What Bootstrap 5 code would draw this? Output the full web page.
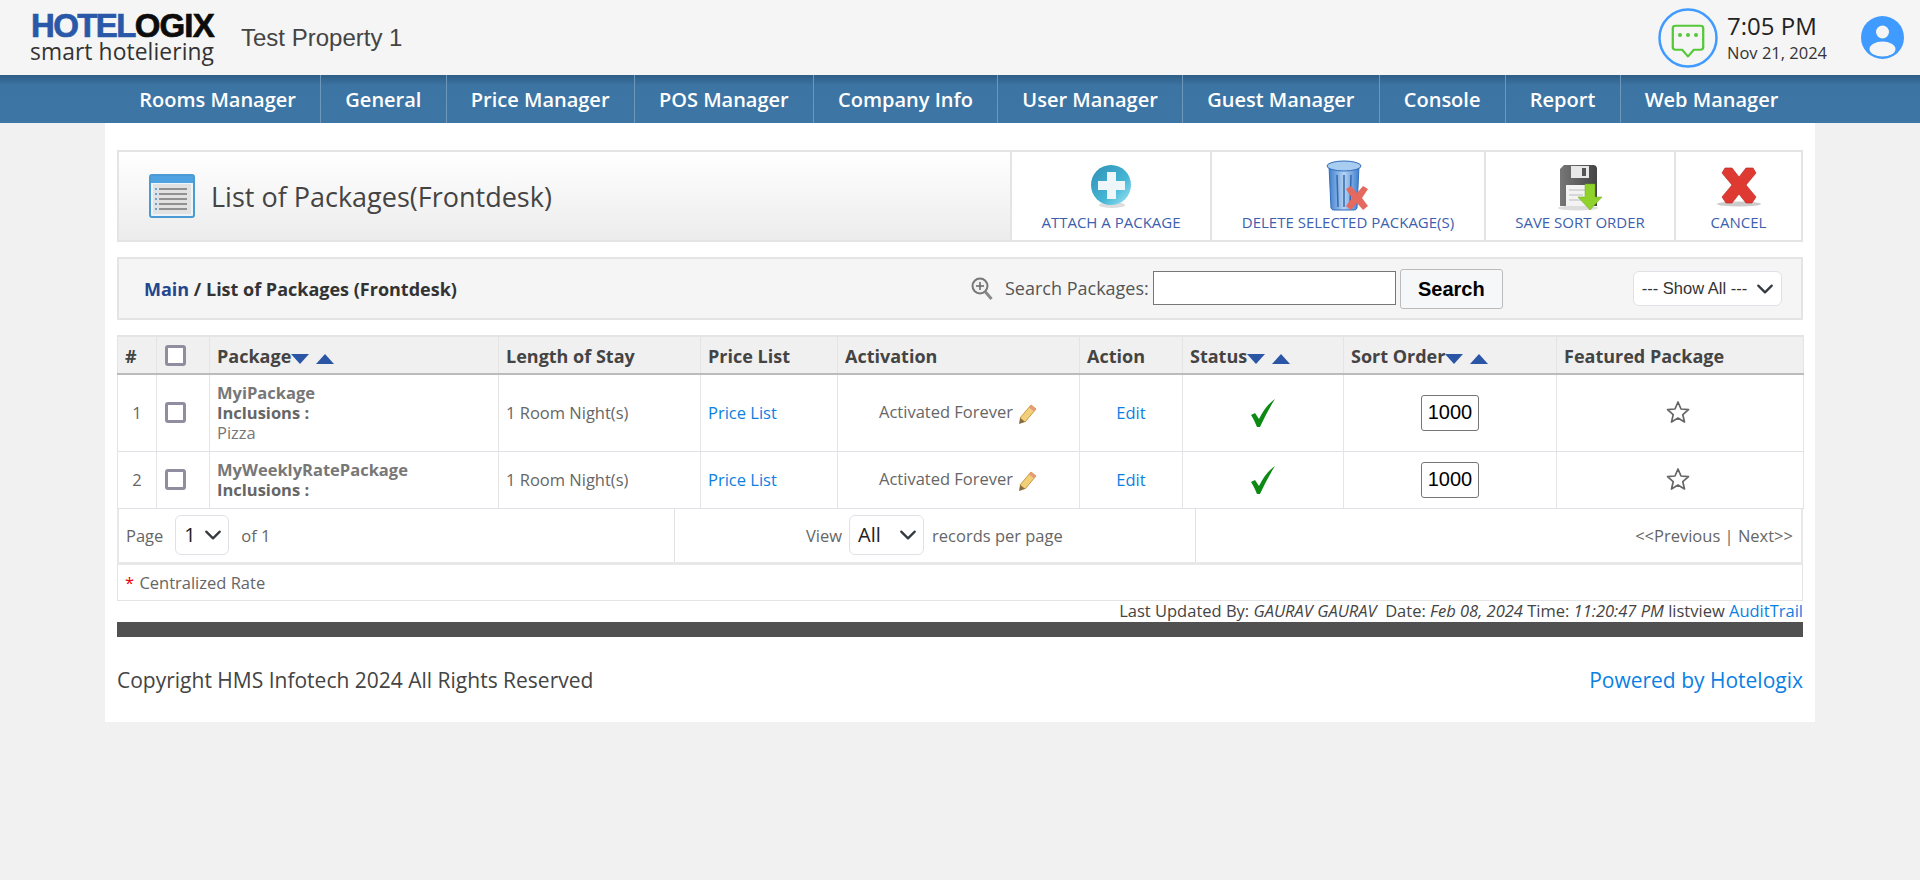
<!DOCTYPE html>
<html lang="en"><head><meta charset="utf-8"><title>List of Packages</title>
<link href="https://cdn.jsdelivr.net/npm/bootstrap@5.3.0/dist/css/bootstrap.min.css" rel="stylesheet">
<style>
body{background:#f1f1f1;font-family:"Open Sans",sans-serif;color:#555;font-size:16.5px}
a{text-decoration:none}
.hx-top{height:75px;background:#f5f5f5;padding:0 16px 0 30px}
.hx-logo{width:190px;line-height:1}
.hx-logo-a{font:700 33px/27px "Liberation Sans",sans-serif;letter-spacing:-1.6px;color:#2a58a8;white-space:nowrap;-webkit-text-stroke:.7px currentColor;padding-left:1px}
.hx-logo-a b{color:#0c0c0c;font-weight:700;letter-spacing:-.9px}
.hx-logo-b{font:400 22.800px/25px "Open Sans",sans-serif;color:#333;white-space:nowrap;letter-spacing:.1px}
.hx-prop{font:400 24px "Liberation Sans",sans-serif;color:#444;margin-left:21px}
.hx-time{font-size:24px;line-height:30px;color:#222;margin-left:9px;width:134px}
.hx-date{font-size:16.5px;line-height:24px;color:#333}
.hx-nav{height:48px;background:linear-gradient(#2e5e85,#3c74a3 22%,#3d76a5);padding-left:115px}
.hx-nav a{color:#fff;font-weight:600;font-size:20px;padding:1px 24.2px 0;line-height:47px;border-right:1px solid #6d98bc;white-space:nowrap}
.hx-nav a:last-child{border-right:0}
.hx-page{width:1710px;background:#fff;padding:27px 12px 0;height:599px}
.hx-title{height:92px;border:2px solid #e4e4e4;background:linear-gradient(#fff,#ececec);margin-bottom:15px}
.hx-title h1{font-size:27px;font-weight:400;color:#444;margin:2px 0 0 16px}
.hx-title-l{padding-left:30px}
.hx-tool{background:#fff;border-left:2px solid #e4e4e4;color:#3c60ae;font-size:15px;text-align:center;height:88px;padding-top:8px;text-transform:uppercase}
.hx-tool span{display:block;line-height:20px}
.hx-tool svg{display:block;margin:0 auto;height:52px}
.hx-t1{width:200px}.hx-t2{width:274px}.hx-t3{width:190px}.hx-t4{width:127px}
.hx-crumb{height:63px;background:#f5f5f5;border:2px solid #e4e4e4;margin-bottom:15px;padding-left:25px}
.hx-crumb-t{font-size:18px;font-weight:700;color:#333;width:826px;padding-top:2px}
.hx-crumb-t a{color:#24468f}
.hx-slabel{font-size:18px;color:#555;margin:0 4px 0 11px;white-space:nowrap}
.hx-in{width:243px;height:34px;border:1px solid #767676;border-radius:0;padding:0 4px;margin-bottom:1px;background:#fff}
.hx-sbtn{font:700 20px "Liberation Sans",sans-serif;color:#000;background:#f6f7f9;border:1px solid #bbb;width:103px;height:40px;padding:2px 0 0;margin:0 0 0 4px;border-radius:3px}
.hx-sel{font-family:"Liberation Sans",sans-serif;font-size:16.5px;width:149px;height:35px;padding:0 0 0 8px;margin-left:130px;color:#333;background-position:right 4px center;background-size:24px 18px}
.hx-table{table-layout:fixed;width:1686px;margin:0;color:#666;font-size:16.5px}
.hx-table th,.hx-table td{padding:2px 7px 0;vertical-align:middle;border-color:#e4e4e4}
.hx-table .hx-ctl{padding-top:0}
.hx-table thead th{background:#f0f0f0;color:#444;font-weight:700;font-size:18px;height:38px;border-top:2px solid #e4e4e4;border-bottom:2px solid #bbb;white-space:nowrap}
.hx-table tbody tr:first-child td{height:77px}
.hx-table tbody tr:last-child td{height:57px}
.hx-table .hx-pk{line-height:20px;font-size:16.5px;color:#777;padding-top:0}
.hx-pk b{font-weight:700;color:#777}
.hx-pk b+br+b{color:#666}
.w1{width:39px}.w2{width:53px}.w3{width:289px}.w4{width:202px}.w5{width:137px}.w6{width:242px}.w7{width:103px}.w8{width:161px}.w9{width:213px}.w10{width:247px}
.hx-cb{width:21px;height:21px;border:3px solid #8e8ea0;border-radius:3px;margin:0 0 0 1px;display:block;background:#fff;appearance:none}
.hx-tri{margin-left:0;vertical-align:-1px}
.hx-tri2{margin-left:7px}
.hx-link{color:#0b7fe3}
.hx-num{width:58px;height:36px;font:400 20px "Liberation Sans",sans-serif;color:#000;border:1px solid #767676;border-radius:3px;text-align:center;padding:0;display:block;margin:0 auto}
.hx-acti{padding-left:41px!important;position:relative;top:-1px}
.hx-star{display:block;margin:-2px auto 0;position:relative;left:-2px}
.hx-pager{height:56px;border:2px solid #e8e8e8;border-top:0;border-bottom-width:3px;background:#fff;font-size:16.5px;color:#666;line-height:1.5}
.hx-p1{width:556px;padding:2px 0 0 7px;border-right:1px solid #e2e2e2}
.hx-p2{width:521px;padding:2px 0 0 131px;border-right:1px solid #e2e2e2}
.hx-p3{flex:1;padding:2px 8px 0 0}
.hx-ps{width:54px;height:40px;font-size:20px;padding:0 0 0 8px;margin:0 12px;font-family:"Open Sans",sans-serif;color:#222;background-position:right 3px center;background-size:24px 18px;position:relative;top:-1px}
.hx-ps2{width:75px;margin:0 8px 0 7px}
.hx-note{height:36px;border:1px solid #e4e4e4;border-top:0;padding:0 7px;line-height:35px;color:#666}
.hx-note i{color:#e00;font-style:normal;margin-right:1px}
.hx-upd{height:21px;line-height:20px;text-align:right;color:#444;white-space:pre}
.hx-bar{height:15px;background:#515151}
.hx-foot{font-size:21px;color:#444;margin-top:28px}
</style></head><body>
<header class="hx-top d-flex align-items-center">
  <div class="hx-logo"><div class="hx-logo-a">HOTEL<b>OGIX</b></div><div class="hx-logo-b">smart hoteliering</div></div>
  <div class="hx-prop">Test Property 1</div>
  <div class="ms-auto d-flex align-items-center">
    <svg width="60" height="60" viewBox="0 0 60 60"><circle cx="30" cy="30" r="28.5" fill="none" stroke="#3f9bff" stroke-width="2.5"/><path d="M17 16h26a3 3 0 0 1 3 3v23a3 3 0 0 1-3 3H36l-6 8-6-8h-7a3 3 0 0 1-3-3V19a3 3 0 0 1 3-3z" transform="translate(1.5 4.5) scale(.95 .83)" fill="none" stroke="#55c83a" stroke-width="2.4" stroke-linejoin="round"/><circle cx="22" cy="27" r="2" fill="#55c83a"/><circle cx="30" cy="27" r="2" fill="#55c83a"/><circle cx="38" cy="27" r="2" fill="#55c83a"/></svg>
    <div class="hx-time">7:05 PM<div class="hx-date">Nov 21, 2024</div></div>
    <svg width="43" height="43" viewBox="0 0 43 43"><circle cx="21.5" cy="21.5" r="21.5" fill="#3f9bff"/><circle cx="21.5" cy="16" r="6.5" fill="#f5f5f5"/><ellipse cx="21.5" cy="33" rx="13" ry="7.5" fill="#f5f5f5"/></svg>
  </div>
</header>
<nav class="hx-nav d-flex">
  <a href="#">Rooms Manager</a><a href="#">General</a><a href="#">Price Manager</a><a href="#">POS Manager</a><a href="#">Company Info</a><a href="#">User Manager</a><a href="#">Guest Manager</a><a href="#">Console</a><a href="#">Report</a><a href="#">Web Manager</a>
</nav>
<main class="hx-page mx-auto">
  <section class="hx-title d-flex align-items-center">
    <div class="hx-title-l d-flex align-items-center flex-grow-1">
      <svg width="46" height="44" viewBox="0 0 46 44"><rect x="1" y="1" width="44" height="42" rx="2" fill="#eef3f7" stroke="#4a9ad4" stroke-width="2"/><rect x="2" y="2" width="42" height="7" fill="#4fa3e0"/><rect x="4" y="10" width="38" height="30" fill="#e2e2e2"/><g stroke="#777" stroke-width="1.4"><path d="M10 15h28M10 20h28M10 25h28M10 30h28M10 35h28"/></g><g fill="#3f8fd0"><circle cx="7" cy="15" r="1"/><circle cx="7" cy="20" r="1"/><circle cx="7" cy="25" r="1"/><circle cx="7" cy="30" r="1"/><circle cx="7" cy="35" r="1"/></g></svg>
      <h1>List of Packages(Frontdesk)</h1>
    </div>
    <a href="#" class="hx-tool hx-t1"><svg width="48" height="52" viewBox="0 0 48 52"><defs><linearGradient id="pg" x1="0" y1="0" x2="1" y2="1"><stop offset="0" stop-color="#2f8fb5"/><stop offset=".6" stop-color="#45b6d6"/><stop offset="1" stop-color="#a4e8f4"/></linearGradient></defs><ellipse cx="25" cy="45" rx="13" ry="3" fill="#ddd"/><circle cx="24" cy="25" r="20" fill="url(#pg)"/><path d="M20 12h9v9h9v9h-9v9h-9v-9h-9v-9h9z" fill="#eef6f9"/></svg><span>Attach a Package</span></a>
    <a href="#" class="hx-tool hx-t2"><svg width="52" height="52" viewBox="0 0 52 52"><defs><linearGradient id="tg" x1="0" x2="1" y1="0" y2="0"><stop offset="0" stop-color="#3f7fd0"/><stop offset=".5" stop-color="#b5d3f3"/><stop offset="1" stop-color="#3f7fd0"/></linearGradient></defs><path d="M7 6h30l-2 42a3 3 0 0 1-3 2H12a3 3 0 0 1-3-2z" fill="url(#tg)" stroke="#2f6dbb"/><ellipse cx="22" cy="6" rx="17" ry="5" fill="#a9cdf1" stroke="#2f6dbb"/><g stroke="#3268ad" stroke-width="1.5"><path d="M15 15l1 32M22 15v32M29 15l-1 32"/></g><path d="M24 29l5-3 6 7 6-7 5 3-6 9 6 8-5 4-6-7-6 7-5-4 6-8z" fill="#e5695f"/></svg><span>Delete Selected Package(s)</span></a>
    <a href="#" class="hx-tool hx-t3"><svg width="48" height="52" viewBox="0 0 48 52"><defs><linearGradient id="fg" x1="0" x2="1" y1="0" y2="0"><stop offset="0" stop-color="#777"/><stop offset="1" stop-color="#444"/></linearGradient></defs><ellipse cx="22" cy="48" rx="20" ry="2.500" fill="#ddd"/><path d="M8 5h30a4 4 0 0 1 3 3v38H4V9z" fill="url(#fg)"/><rect x="15" y="6" width="18" height="12" fill="#e8e8e8"/><rect x="26" y="8" width="4" height="8" fill="#555"/><rect x="10" y="25" width="26" height="21" fill="#f3f3f3"/><path d="M13 30h17M13 35h14M13 40h14" stroke="#bbb"/><path d="M29 24h10v13h7L34 50 22 37h7z" fill="#8fd22c" stroke="#6aa81e" stroke-width=".5"/></svg><span>Save Sort Order</span></a>
    <a href="#" class="hx-tool hx-t4"><svg width="44" height="52" viewBox="0 0 44 52"><ellipse cx="22" cy="44" rx="22" ry="2.500" fill="#ccc"/><path d="M8 8h7l7 9 7-9h7l3 5-10 12 10 12-4 6h-6l-7-9-7 9H9l-4-6 10-12L5 13z" fill="#de3a32" stroke="#bb2d26" stroke-width=".7"/></svg><span>Cancel</span></a>
  </section>
  <section class="hx-crumb d-flex align-items-center">
    <div class="hx-crumb-t text-nowrap"><a href="#">Main</a> / List of Packages (Frontdesk)</div>
    <svg width="24" height="26" viewBox="0 0 24 26"><circle cx="10" cy="10" r="7.500" fill="#f0f0f0" stroke="#777" stroke-width="2"/><path d="M15.500 16l6 7" stroke="#888" stroke-width="3"/><path d="M10 6v8M6 10h8" stroke="#666" stroke-width="1.500"/></svg>
    <span class="hx-slabel">Search Packages:</span>
    <input class="hx-in" type="text" aria-label="Search Packages">
    <button class="btn hx-sbtn">Search</button>
    <select class="form-select hx-sel" aria-label="Filter"><option>--- Show All ---</option></select>
  </section>
  <table class="table table-bordered hx-table">
    <colgroup><col class="w1"><col class="w2"><col class="w3"><col class="w4"><col class="w5"><col class="w6"><col class="w7"><col class="w8"><col class="w9"><col class="w10"></colgroup>
    <thead><tr>
      <th>#</th><th class="hx-ctl"><input type="checkbox" class="hx-cb" aria-label="All"></th>
      <th>Package<svg class="hx-tri" width="18" height="10"><path d="M0 0h18L9 10z" fill="#2a56a5"/></svg><svg class="hx-tri hx-tri2" width="18" height="10"><path d="M0 10h18L9 0z" fill="#2a56a5"/></svg></th>
      <th>Length of Stay</th><th>Price List</th><th>Activation</th><th>Action</th>
      <th>Status<svg class="hx-tri" width="18" height="10"><path d="M0 0h18L9 10z" fill="#2a56a5"/></svg><svg class="hx-tri hx-tri2" width="18" height="10"><path d="M0 10h18L9 0z" fill="#2a56a5"/></svg></th>
      <th>Sort Order<svg class="hx-tri" width="18" height="10"><path d="M0 0h18L9 10z" fill="#2a56a5"/></svg><svg class="hx-tri hx-tri2" width="18" height="10"><path d="M0 10h18L9 0z" fill="#2a56a5"/></svg></th>
      <th>Featured Package</th>
    </tr></thead>
    <tbody>
      <tr>
        <td class="text-center">1</td><td class="hx-ctl"><input type="checkbox" class="hx-cb" aria-label="Select"></td>
        <td class="hx-pk"><b>MyiPackage</b><br><b>Inclusions :</b><br>Pizza</td>
        <td>1 Room Night(s)</td><td><a class="hx-link" href="#">Price List</a></td>
        <td class="hx-acti">Activated Forever <svg width="20" height="22" viewBox="0 0 20 22"><path d="M3 15L14 2l5 4L8 19z" fill="#f2cf7a" stroke="#c89a3a"/><path d="M14 2l5 4-2 2.500-5-4z" fill="#e89b7a"/><path d="M3 15l5 4-6 2z" fill="#8a6a40"/></svg></td>
        <td class="text-center"><a class="hx-link" href="#">Edit</a></td>
        <td class="text-center hx-ctl"><svg width="26" height="28" viewBox="0 0 26 28"><path d="M1 16l4-2 4 6C13 12 18 5 25 0 20 8 15 17 10 28H7C5 23 3 19 1 16z" fill="#0d8a14"/></svg></td>
        <td class="hx-ctl"><input class="hx-num" value="1000" aria-label="Sort order"></td>
        <td class="hx-ctl"><svg class="hx-star" width="24" height="24" viewBox="0 0 24 24"><path d="M12 2l3 7 7.500 .7-5.700 5 1.700 7.300-6.500-3.900L5.500 22l1.700-7.300-5.700-5L9 9z" fill="#fff" stroke="#666" stroke-width="1.700" stroke-linejoin="round"/></svg></td>
      </tr>
      <tr>
        <td class="text-center">2</td><td class="hx-ctl"><input type="checkbox" class="hx-cb" aria-label="Select"></td>
        <td class="hx-pk"><b>MyWeeklyRatePackage</b><br><b>Inclusions :</b></td>
        <td>1 Room Night(s)</td><td><a class="hx-link" href="#">Price List</a></td>
        <td class="hx-acti">Activated Forever <svg width="20" height="22" viewBox="0 0 20 22"><path d="M3 15L14 2l5 4L8 19z" fill="#f2cf7a" stroke="#c89a3a"/><path d="M14 2l5 4-2 2.500-5-4z" fill="#e89b7a"/><path d="M3 15l5 4-6 2z" fill="#8a6a40"/></svg></td>
        <td class="text-center"><a class="hx-link" href="#">Edit</a></td>
        <td class="text-center hx-ctl"><svg width="26" height="28" viewBox="0 0 26 28"><path d="M1 16l4-2 4 6C13 12 18 5 25 0 20 8 15 17 10 28H7C5 23 3 19 1 16z" fill="#0d8a14"/></svg></td>
        <td class="hx-ctl"><input class="hx-num" value="1000" aria-label="Sort order"></td>
        <td class="hx-ctl"><svg class="hx-star" width="24" height="24" viewBox="0 0 24 24"><path d="M12 2l3 7 7.500 .7-5.700 5 1.700 7.300-6.500-3.900L5.500 22l1.700-7.300-5.700-5L9 9z" fill="#fff" stroke="#666" stroke-width="1.700" stroke-linejoin="round"/></svg></td>
      </tr>
    </tbody>
  </table>
  <div class="hx-pager d-flex">
    <div class="hx-p1 d-flex align-items-center">Page<select class="form-select hx-ps" aria-label="Page"><option>1</option></select>of 1</div>
    <div class="hx-p2 d-flex align-items-center">View<select class="form-select hx-ps hx-ps2" aria-label="Per page"><option>All</option></select>records per page</div>
    <div class="hx-p3 d-flex align-items-center justify-content-end">&lt;&lt;Previous | Next&gt;&gt;</div>
  </div>
  <div class="hx-note"><i>*</i> Centralized Rate</div>
  <div class="hx-upd">Last Updated By: <em>GAURAV GAURAV</em>  Date: <em>Feb 08, 2024</em> Time: <em>11:20:47 PM</em> listview <a class="hx-link" href="#">AuditTrail</a></div>
  <div class="hx-bar"></div>
  <footer class="hx-foot d-flex justify-content-between"><span>Copyright HMS Infotech 2024 All Rights Reserved</span><a class="hx-link" href="#">Powered by Hotelogix</a></footer>
</main>
<script src="https://cdn.jsdelivr.net/npm/bootstrap@5.3.0/dist/js/bootstrap.bundle.min.js"></script>
</body></html>
